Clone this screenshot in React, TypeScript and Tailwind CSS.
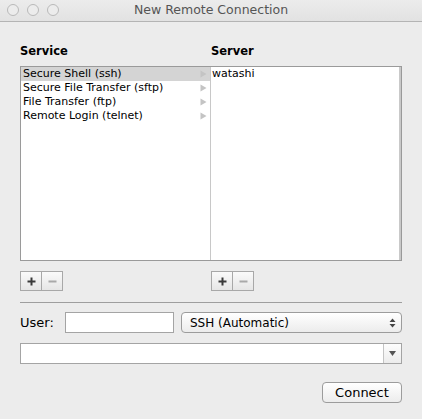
import { useState } from "react";

const services = [
  "Secure Shell (ssh)",
  "Secure File Transfer (sftp)",
  "File Transfer (ftp)",
  "Remote Login (telnet)",
];

const servers = ["watashi"];

const Arrow = () => (
  <svg width="7" height="8" viewBox="0 0 7 8" className="shrink-0">
    <path d="M0.5 0.5 L6.5 4 L0.5 7.5 Z" fill="#c4c4c4" />
  </svg>
);

const PlusMinus = () => (
  <div className="flex h-[20px] w-[43px] border border-[#a8a8a8] bg-gradient-to-b from-[#fafafa] to-[#e6e6e6]">
    <div className="flex w-[21px] items-center justify-center border-r border-[#a8a8a8]">
      <svg width="9" height="9" viewBox="0 0 9 9">
        <path d="M4.5 0.5 V8.5 M0.5 4.5 H8.5" stroke="#3a3a3a" strokeWidth="2" />
      </svg>
    </div>
    <div className="flex flex-1 items-center justify-center">
      <svg width="9" height="9" viewBox="0 0 9 9">
        <path d="M0.5 4.5 H8.5" stroke="#a9a9a9" strokeWidth="2" />
      </svg>
    </div>
  </div>
);

export default function App() {
  const [service, setService] = useState(0);
  const [user, setUser] = useState("");

  return (
    <div
      className="flex h-[419px] w-[422px] flex-col overflow-hidden bg-[#ececec] text-[11px] text-black"
      style={{ fontFamily: '"DejaVu Sans", "Liberation Sans", sans-serif' }}
    >
      {/* title bar */}
      <div className="relative flex h-[22px] shrink-0 items-center justify-center border-b border-[#b4b4b4] bg-gradient-to-b from-[#ececec] to-[#e2e2e2]">
        <div className="absolute left-[7px] top-[4px] flex gap-[8px]">
          {[0, 1, 2].map((i) => (
            <div key={i} className="h-[12px] w-[12px] rounded-full border border-[#b9b9b9] bg-[#ececec]" />
          ))}
        </div>
        <span className="text-[12.5px] text-[#555]">New Remote Connection</span>
      </div>

      <div className="flex flex-col px-[20px] pt-[21px]">
        <div className="flex h-[18px] items-center text-[11.5px] font-bold">
          <div className="w-[191px]">Service</div>
          <div>Server</div>
        </div>

        {/* two column browser */}
        <div className="mt-[5px] flex h-[195px] border border-[#9a9a9a] bg-white">
          <div className="w-[190px] border-r border-[#c8c8c8]">
            {services.map((s, i) => (
              <div
                key={s}
                onClick={() => setService(i)}
                className={`flex h-[14px] items-center justify-between pl-[2px] pr-[3px] leading-[14px] ${
                  i === service ? "bg-[#d4d4d4]" : ""
                }`}
              >
                <span>{s}</span>
                <Arrow />
              </div>
            ))}
          </div>
          <div className="flex-1">
            {servers.map((s) => (
              <div key={s} className="h-[14px] pl-[1px] leading-[14px]">
                {s}
              </div>
            ))}
          </div>
          <div className="w-[2px] bg-[#c9c9c9]" />
        </div>

        <div className="mt-[10px] flex">
          <div className="w-[191px]">
            <PlusMinus />
          </div>
          <PlusMinus />
        </div>

        <div className="mt-[11px] h-px bg-[#9e9e9e]" />

        {/* user row */}
        <div className="mt-[9px] flex items-center">
          <span className="w-[45px] text-[13px]">User:</span>
          <input
            value={user}
            onChange={(e) => setUser(e.target.value)}
            className="h-[21px] w-[109px] border border-[#a4a4a4] bg-white px-1 outline-none"
          />
          <div className="ml-[7px] flex h-[21px] flex-1 items-center justify-between rounded-[4px] border border-[#9c9c9c] bg-gradient-to-b from-[#ffffff] to-[#ececec] pl-[8px] pr-[5px] text-[12px]">
            <span>SSH (Automatic)</span>
            <svg width="7" height="10" viewBox="0 0 7 10">
              <path d="M3.5 0.5 L6.5 4 H0.5 Z M3.5 9.5 L6.5 6 H0.5 Z" fill="#444" />
            </svg>
          </div>
        </div>

        {/* combo box */}
        <div className="mt-[10px] flex h-[21px] border border-[#a4a4a4] bg-white">
          <div className="flex-1" />
          <div className="flex w-[18px] items-center justify-center border-l border-[#c4c4c4] bg-gradient-to-b from-[#fdfdfd] to-[#ececec]">
            <svg width="7" height="5" viewBox="0 0 7 5">
              <path d="M0 0 H7 L3.5 5 Z" fill="#555" />
            </svg>
          </div>
        </div>

        <div className="mt-[18px] flex justify-end">
          <button className="h-[21px] w-[80px] rounded-[4px] border border-[#9c9c9c] bg-gradient-to-b from-[#ffffff] to-[#ececec] text-[13px]">
            Connect
          </button>
        </div>
      </div>
    </div>
  );
}
